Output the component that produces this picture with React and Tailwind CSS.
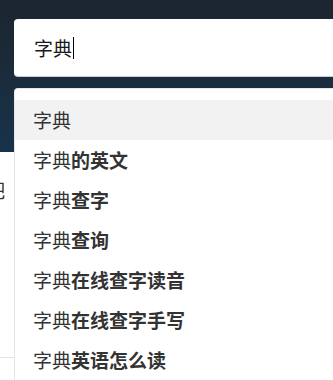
const suggestions = ["的英文", "查字", "查询", "在线查字读音", "在线查字手写", "英语怎么读"];

export default function App() {
  const font = { fontFamily: '"Noto Sans CJK SC", "Noto Sans", sans-serif' };
  return (
    <div className="relative h-[380px] w-[333px] overflow-hidden bg-white" style={font}>
      {/* page behind the search overlay */}
      <div className="h-[152px] bg-gradient-to-b from-[#1c2530] to-[#17334a]" />
      <div className="mt-[28px] -ml-[14px] text-[19px] leading-none text-[#333]">吧</div>
      <div className="mt-[158px] h-px w-[14px] bg-[#e3e3e3]" />

      {/* search box */}
      <div className="absolute left-[14px] top-[19px] flex h-[57px] w-[340px] items-center rounded-[4px] bg-white pl-[20px] shadow-[0_1px_0_#c9ccd0]">
        <span className="text-[19px] leading-none text-[#1a1a1a]">字典</span>
        <span className="ml-px h-[22px] w-px bg-black" />
      </div>

      {/* suggestion dropdown */}
      <div className="absolute left-[14px] top-[88px] w-[340px] rounded-tl-[4px] border-l border-t border-[#e6e6e6] bg-white pt-[11px] pb-4">
        <div className="flex h-10 items-center bg-[#f2f2f2] pl-[18px] text-[19px] text-[#333]">字典</div>
        {suggestions.map((s) => (
          <div key={s} className="flex h-10 items-center pl-[18px] text-[19px] text-[#333]">
            <span>字典</span>
            <span className="font-bold">{s}</span>
          </div>
        ))}
      </div>
    </div>
  );
}
